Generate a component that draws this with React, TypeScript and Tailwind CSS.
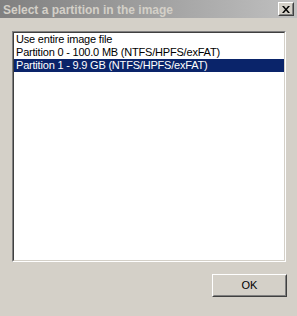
import React, { useState } from 'react';

const items = [
  'Use entire image file',
  'Partition 0 - 100.0 MB (NTFS/HPFS/exFAT)',
  'Partition 1 - 9.9 GB (NTFS/HPFS/exFAT)',
];

const App: React.FC = () => {
  const [selected, setSelected] = useState(2);

  return (
    <div
      className="w-[297px] h-[316px] bg-[#d4d0c8] flex flex-col overflow-hidden"
      style={{ fontFamily: '"Liberation Sans", Arial, sans-serif' }}
    >
      {/* title bar */}
      <div className="h-[18px] flex items-center justify-between pl-[3px] pr-[3px] bg-gradient-to-r from-[#808080] to-[#c0c0c0]">
        <span className="text-[12px] font-bold text-[#d4d0c8] leading-none mt-[1px]">Select a partition in the image</span>
        <button className="w-[16px] h-[14px] border border-t-white border-l-white border-r-[#404040] border-b-[#404040] bg-[#d4d0c8]">
          <div className="w-full h-full border border-t-[#d4d0c8] border-l-[#d4d0c8] border-r-[#808080] border-b-[#808080] flex items-center justify-center">
            <svg width="8" height="7" viewBox="0 0 8 7">
              <path d="M0 0h2l2 2.5 2-2.5h2l-3 3.5 3 3.5h-2l-2-2.5-2 2.5h-2l3-3.5z" fill="#000" />
            </svg>
          </div>
        </button>
      </div>

      {/* list box */}
      <div className="mt-[13px] ml-[12px] w-[274px] h-[231px] border border-t-[#808080] border-l-[#808080] border-r-white border-b-white">
        <div className="w-full h-full border border-t-[#404040] border-l-[#404040] border-r-[#d4d0c8] border-b-[#d4d0c8] bg-white">
          {items.map((item, i) => (
            <div
              key={item}
              onClick={() => setSelected(i)}
              className={`h-[13px] pl-[2px] text-[11px] tracking-[-0.2px] leading-[13px] whitespace-nowrap cursor-default ${
                selected === i ? 'bg-[#0a246a] text-white' : 'text-black'
              }`}
            >
              {item}
            </div>
          ))}
        </div>
      </div>

      {/* buttons */}
      <div className="mt-[12px] flex justify-end pr-[10px]">
        <button className="w-[75px] h-[23px] border border-t-white border-l-white border-r-[#404040] border-b-[#404040] bg-[#d4d0c8]">
          <div className="w-full h-full border border-t-[#d4d0c8] border-l-[#d4d0c8] border-r-[#808080] border-b-[#808080] flex items-center justify-center text-[11px] text-black">
            OK
          </div>
        </button>
      </div>
    </div>
  );
};

export default App;
